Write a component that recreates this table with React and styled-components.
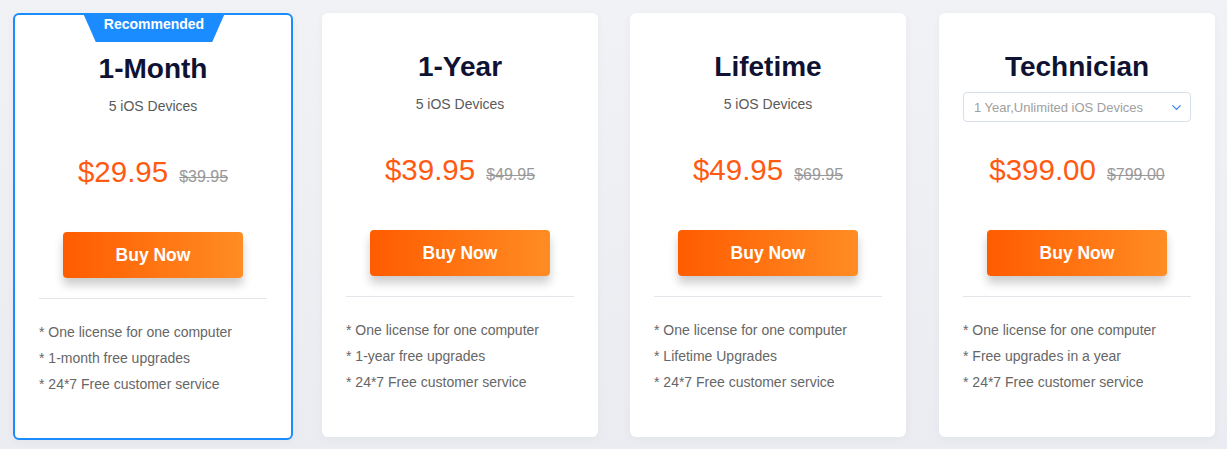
import React from "react";
import styled, { createGlobalStyle } from "styled-components";
import { ChevronDown } from "lucide-react";

const GlobalStyle = createGlobalStyle`
  html, body {
    margin: 0;
    padding: 0;
    background: linear-gradient(180deg, #f1f2f5 0%, #eaecf1 100%);
    font-family: "Liberation Sans", Arial, sans-serif;
  }
`;

const Page = styled.div`
  width: 1227px;
  height: 449px;
  box-sizing: border-box;
  padding: 13px 0 0 13px;
  display: flex;
  align-items: flex-start;
  gap: 32px;
`;

const Card = styled.div`
  position: relative;
  box-sizing: border-box;
  width: ${(p) => (p.$featured ? "280px" : "276px")};
  height: ${(p) => (p.$featured ? "427px" : "424px")};
  margin-right: ${(p) => (p.$featured ? "-3px" : "0")};
  margin-left: ${(p) => (p.$last ? "1px" : "0")};
  background: #fff;
  border-radius: 6px;
  border: ${(p) => (p.$featured ? "2px solid #1a8cff" : "none")};
  padding: 37px 24px 0;
  display: flex;
  flex-direction: column;
  align-items: center;
  box-shadow: 0 2px 8px rgba(30, 40, 70, 0.04);
`;

const Badge = styled.div`
  position: absolute;
  top: -2px;
  left: 50%;
  transform: translateX(-50%);
  margin-left: 1px;
  width: 142px;
  height: 29px;
  background: #1a8cff;
  clip-path: polygon(0 0, 100% 0, 91% 100%, 9% 100%);
  color: #fff;
  font-weight: 700;
  font-size: 14px;
  line-height: 22px;
  text-align: center;
`;

const Title = styled.h2`
  margin: 0;
  font-size: 28px;
  line-height: 34px;
  font-weight: 700;
  color: #0f1232;
`;

const SubSlot = styled.div`
  margin-top: 8px;
  height: 30px;
  width: 100%;
  display: flex;
  justify-content: center;
`;

const Subtitle = styled.div`
  font-size: 14px;
  line-height: 24px;
  color: #5a5a5a;
`;

const Select = styled.div`
  box-sizing: border-box;
  width: 228px;
  height: 30px;
  border: 1px solid #d8dfe9;
  border-radius: 4px;
  padding: 0 6px 0 10px;
  display: flex;
  align-items: center;
  justify-content: space-between;
  font-size: 13px;
  color: #a0a0a0;
`;

const PriceRow = styled.div`
  margin-top: 30px;
  height: 36px;
  display: flex;
  align-items: baseline;
  gap: 11px;
`;

const Price = styled.span`
  font-size: 29.5px;
  line-height: 36px;
  color: #ff5a12;
`;

const OldPrice = styled.span`
  font-size: 16px;
  color: #999;
  text-decoration: line-through;
`;

const BuyButton = styled.button`
  margin-top: 42px;
  width: 180px;
  height: 46px;
  border: none;
  border-radius: 4px;
  background: linear-gradient(90deg, #ff5c00 0%, #ff8c24 100%);
  color: #fff;
  font-family: "Liberation Sans", Arial, sans-serif;
  font-weight: 700;
  font-size: 17.5px;
  box-shadow: 0 7px 10px rgba(0, 0, 0, 0.2);
  cursor: pointer;
`;

const Divider = styled.hr`
  margin: 20px 0 0;
  width: 100%;
  border: none;
  border-top: 1px solid #e3e5ea;
`;

const Features = styled.ul`
  list-style: none;
  margin: 0;
  padding: 20px 0 0;
  width: 100%;
`;

const Feature = styled.li`
  font-size: 14px;
  line-height: 26px;
  color: #666;
`;

const plans = [
  {
    name: "1-Month",
    sub: "5 iOS Devices",
    price: "$29.95",
    old: "$39.95",
    features: ["One license for one computer", "1-month free upgrades", "24*7 Free customer service"],
    featured: true,
  },
  {
    name: "1-Year",
    sub: "5 iOS Devices",
    price: "$39.95",
    old: "$49.95",
    features: ["One license for one computer", "1-year free upgrades", "24*7 Free customer service"],
  },
  {
    name: "Lifetime",
    sub: "5 iOS Devices",
    price: "$49.95",
    old: "$69.95",
    features: ["One license for one computer", "Lifetime Upgrades", "24*7 Free customer service"],
  },
  {
    name: "Technician",
    select: "1 Year,Unlimited iOS Devices",
    price: "$399.00",
    old: "$799.00",
    features: ["One license for one computer", "Free upgrades in a year", "24*7 Free customer service"],
    last: true,
  },
];

export default function App() {
  return (
    <>
      <GlobalStyle />
      <Page>
        {plans.map((p) => (
          <Card key={p.name} $featured={p.featured} $last={p.last}>
            {p.featured && <Badge>Recommended</Badge>}
            <Title>{p.name}</Title>
            <SubSlot>
              {p.select ? (
                <Select>
                  <span>{p.select}</span>
                  <ChevronDown size={15} color="#2f86f0" strokeWidth={2} />
                </Select>
              ) : (
                <Subtitle>{p.sub}</Subtitle>
              )}
            </SubSlot>
            <PriceRow>
              <Price>{p.price}</Price>
              <OldPrice>{p.old}</OldPrice>
            </PriceRow>
            <BuyButton>Buy Now</BuyButton>
            <Divider />
            <Features>
              {p.features.map((f) => (
                <Feature key={f}>* {f}</Feature>
              ))}
            </Features>
          </Card>
        ))}
      </Page>
    </>
  );
}
